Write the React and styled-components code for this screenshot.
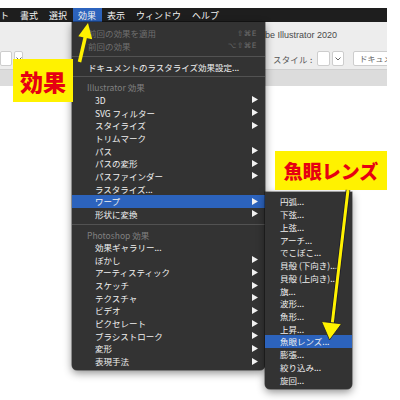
import React from 'react';
import styled, { createGlobalStyle } from 'styled-components';

const Global = createGlobalStyle`
  html, body { margin: 0; padding: 0; background: #ffffff; }
  body { font-family: "Noto Sans CJK JP", "Noto Sans", "DejaVu Sans", sans-serif; }
  * { box-sizing: border-box; }
`;

const Screen = styled.div`
  position: relative;
  width: 400px;
  height: 400px;
  overflow: hidden;
  background: #ffffff;
  padding-top: 8px;
`;

const AppWindow = styled.div`
  width: 387px;
  height: 392px;
  display: flex;
  flex-direction: column;
  background: #ffffff;
  overflow: hidden;
`;

const MenuBar = styled.div`
  height: 14px;
  flex: none;
  background: #1e1e1e;
  display: flex;
  align-items: stretch;
  overflow: hidden;
`;

const MenuTitle = styled.div`
  display: flex;
  align-items: center;
  padding: 0 5.5px;
  font-size: 9px;
  color: #f4f4f4;
  white-space: nowrap;
  background: ${p => (p.$active ? '#2c63bd' : 'transparent')};
  &:first-child { padding-left: 0; }
`;

const TitleBar = styled.div`
  height: 26px;
  flex: none;
  background: #ededed;
  display: flex;
  align-items: center;
  padding-left: 249px;
  font-family: "Liberation Sans", "Noto Sans", sans-serif;
  font-size: 9px;
  color: #4a4a4a;
`;

const ControlBar = styled.div`
  height: 21px;
  flex: none;
  background: #ededed;
  display: flex;
  align-items: center;
  gap: 2px;
  font-size: 8.4px;
  color: #555;
  white-space: nowrap;
  overflow: hidden;
`;

const Field = styled.div`
  flex: none;
  width: ${p => p.$w}px;
  height: 15px;
  background: #ffffff;
  border: 1px solid #cdcdcd;
  border-radius: 2px;
  display: flex;
  align-items: center;
  justify-content: ${p => (p.$center ? 'center' : 'flex-start')};
  padding-left: ${p => (p.$center ? 0 : 6)}px;
  font-size: 8px;
  color: #666;
  white-space: nowrap;
  overflow: hidden;
`;

const Spacer = styled.div`
  flex: none;
  width: ${p => p.$w}px;
`;

const StyleLabel = styled.span`
  flex: none;
  color: #555;
  margin: 0 2px 0 4px;
  letter-spacing: 0.3px;
`;

const Chevron = () => (
  <svg width="6" height="4" viewBox="0 0 6 4">
    <path d="M0.5 0.5 L3 3 L5.5 0.5" fill="none" stroke="#666" strokeWidth="1" />
  </svg>
);

const StyleIcon = () => (
  <svg width="7" height="8" viewBox="0 0 7 8">
    <path d="M1 1 L5.5 4 L1 7" fill="none" stroke="#8a8a8a" strokeWidth="1.2" />
  </svg>
);

const TabBar = styled.div`
  height: 17px;
  flex: none;
  background: #dcdcdc;
  border-top: 1px solid #d0d0d0;
`;

const Canvas = styled.div`
  flex: 1;
  background: #ffffff;
`;

const Menu = styled.div`
  position: absolute;
  left: ${p => p.$x}px;
  top: ${p => p.$y}px;
  width: ${p => p.$w}px;
  background: #333333;
  padding: ${p => p.$pt}px 0 ${p => p.$pb}px;
  display: flex;
  flex-direction: column;
  border-radius: 0 0 5px 5px;
  box-shadow: 0 3px 8px rgba(0, 0, 0, 0.45), 0 0 0 0.5px rgba(0, 0, 0, 0.6);
  z-index: ${p => p.$z};
`;

const Row = styled.div`
  height: ${p => p.$h}px;
  display: flex;
  align-items: center;
  padding-left: ${p => p.$indent}px;
  padding-right: 7px;
  font-size: 8.5px;
  color: ${p => (p.$disabled ? '#6f6f6f' : p.$header ? '#808080' : '#f0f0f0')};
  background: ${p => (p.$active ? '#2c63bd' : 'transparent')};
  white-space: nowrap;
`;

const Label = styled.span`
  flex: none;
`;

const Shortcut = styled.span`
  flex: none;
  margin-left: auto;
  font-family: "DejaVu Sans", "Noto Sans CJK JP", sans-serif;
  font-size: 7.5px;
  line-height: 1;
  color: #6f6f6f;
  letter-spacing: 0.5px;
  margin-right: 1px;
`;

const SubArrow = styled.svg`
  flex: none;
  margin-left: auto;
`;

const Separator = styled.div`
  height: 8px;
  display: flex;
  align-items: center;
  &::after {
    content: '';
    flex: 1;
    height: 1px;
    background: #525252;
  }
`;

const Callout = styled.div`
  position: absolute;
  left: ${p => p.$x}px;
  top: ${p => p.$y}px;
  width: ${p => p.$w}px;
  height: ${p => p.$h}px;
  background: #fff200;
  display: flex;
  align-items: center;
  justify-content: center;
  color: #e60012;
  font-weight: 900;
  font-size: ${p => p.$fs}px;
  z-index: 5;
`;

const Overlay = styled.svg`
  position: absolute;
  left: 0;
  top: 0;
  width: 400px;
  height: 400px;
  pointer-events: none;
  z-index: 6;
`;

const Arrow = () => (
  <SubArrow width="6" height="7" viewBox="0 0 6 7">
    <path d="M0 0 L6 3.5 L0 7 Z" fill="#f2f2f2" />
  </SubArrow>
);

const mainItems = [
  { t: '前回の効果を適用', sc: '⇧⌘E', dis: true },
  { t: '前回の効果', sc: '⌥⇧⌘E', dis: true },
  { sep: true },
  { t: 'ドキュメントのラスタライズ効果設定...' },
  { sep: true },
  { h: 'Illustrator 効果' },
  { t: '3D', sub: true, ind: true },
  { t: 'SVG フィルター', sub: true, ind: true },
  { t: 'スタイライズ', sub: true, ind: true },
  { t: 'トリムマーク', ind: true },
  { t: 'パス', sub: true, ind: true },
  { t: 'パスの変形', sub: true, ind: true },
  { t: 'パスファインダー', sub: true, ind: true },
  { t: 'ラスタライズ...', ind: true },
  { t: 'ワープ', sub: true, ind: true, act: true },
  { t: '形状に変換', sub: true, ind: true },
  { sep: true },
  { h: 'Photoshop 効果' },
  { t: '効果ギャラリー...', ind: true },
  { t: 'ぼかし', sub: true, ind: true },
  { t: 'アーティスティック', sub: true, ind: true },
  { t: 'スケッチ', sub: true, ind: true },
  { t: 'テクスチャ', sub: true, ind: true },
  { t: 'ビデオ', sub: true, ind: true },
  { t: 'ピクセレート', sub: true, ind: true },
  { t: 'ブラシストローク', sub: true, ind: true },
  { t: '変形', sub: true, ind: true },
  { t: '表現手法', sub: true, ind: true },
];

const warpItems = [
  '円弧...', '下弦...', '上弦...', 'アーチ...', 'でこぼこ...',
  '貝殻 (下向き)...', '貝殻 (上向き)...', '旗...', '波形...', '魚形...',
  '上昇...', '魚眼レンズ...', '膨張...', '絞り込み...', '旋回...',
];

const ROW = 12.67;

export default function App() {
  return (
    <>
      <Global />
      <Screen>
        <AppWindow>
          <MenuBar>
            <MenuTitle>ト</MenuTitle>
            <MenuTitle>書式</MenuTitle>
            <MenuTitle>選択</MenuTitle>
            <MenuTitle $active>効果</MenuTitle>
            <MenuTitle>表示</MenuTitle>
            <MenuTitle>ウィンドウ</MenuTitle>
            <MenuTitle>ヘルプ</MenuTitle>
          </MenuBar>
          <TitleBar>Adobe Illustrator 2020</TitleBar>
          <ControlBar>
            <Field $w={12} />
            <Field $w={9} $center><Chevron /></Field>
            <Spacer $w={240} />
            <StyleIcon />
            <StyleLabel>スタイル :</StyleLabel>
            <Field $w={13} />
            <Field $w={12} $center><Chevron /></Field>
            <Spacer $w={5} />
            <Field $w={46}>ドキュメ</Field>
          </ControlBar>
          <TabBar />
          <Canvas />
        </AppWindow>

        <Menu $x={72} $y={22} $w={193} $pt={5} $pb={3} $z={2}>
          {mainItems.map((it, i) => {
            if (it.sep) return <Separator key={i} />;
            if (it.h)
              return (
                <Row key={i} $h={ROW} $indent={15} $header>
                  <Label>{it.h}</Label>
                </Row>
              );
            return (
              <Row key={i} $h={ROW} $indent={it.ind ? 23 : 16} $disabled={it.dis} $active={it.act}>
                <Label>{it.t}</Label>
                {it.sc && <Shortcut>{it.sc}</Shortcut>}
                {it.sub && <Arrow />}
              </Row>
            );
          })}
        </Menu>

        <Menu $x={265} $y={192} $w={87} $pt={3} $pb={3} $z={3}>
          {warpItems.map((t, i) => (
            <Row key={i} $h={12.74} $indent={15} $active={t === '魚眼レンズ...'}>
              <Label>{t}</Label>
            </Row>
          ))}
        </Menu>

        <Callout $x={13} $y={59} $w={60} $h={43} $fs={23}>効果</Callout>
        <Callout $x={275} $y={151} $w={112} $h={39} $fs={19}>魚眼レンズ</Callout>

        <Overlay viewBox="0 0 400 400">
          <line x1="79.5" y1="62" x2="85.3" y2="37" stroke="#fff200" strokeWidth="3.5" />
          <polygon points="88,23 92.2,39.3 78.3,36.3" fill="#fff200" />
          <line x1="348" y1="190" x2="332.2" y2="324" stroke="#1b1b2a" strokeWidth="4.6" />
          <line x1="348" y1="190" x2="332.2" y2="324" stroke="#fff200" strokeWidth="3" />
          <polygon points="329.5,340 321.5,321.5 341.5,323.8" fill="#fff200" stroke="#1b1b2a" strokeWidth="0.8" strokeLinejoin="miter" />
        </Overlay>
      </Screen>
    </>
  );
}
